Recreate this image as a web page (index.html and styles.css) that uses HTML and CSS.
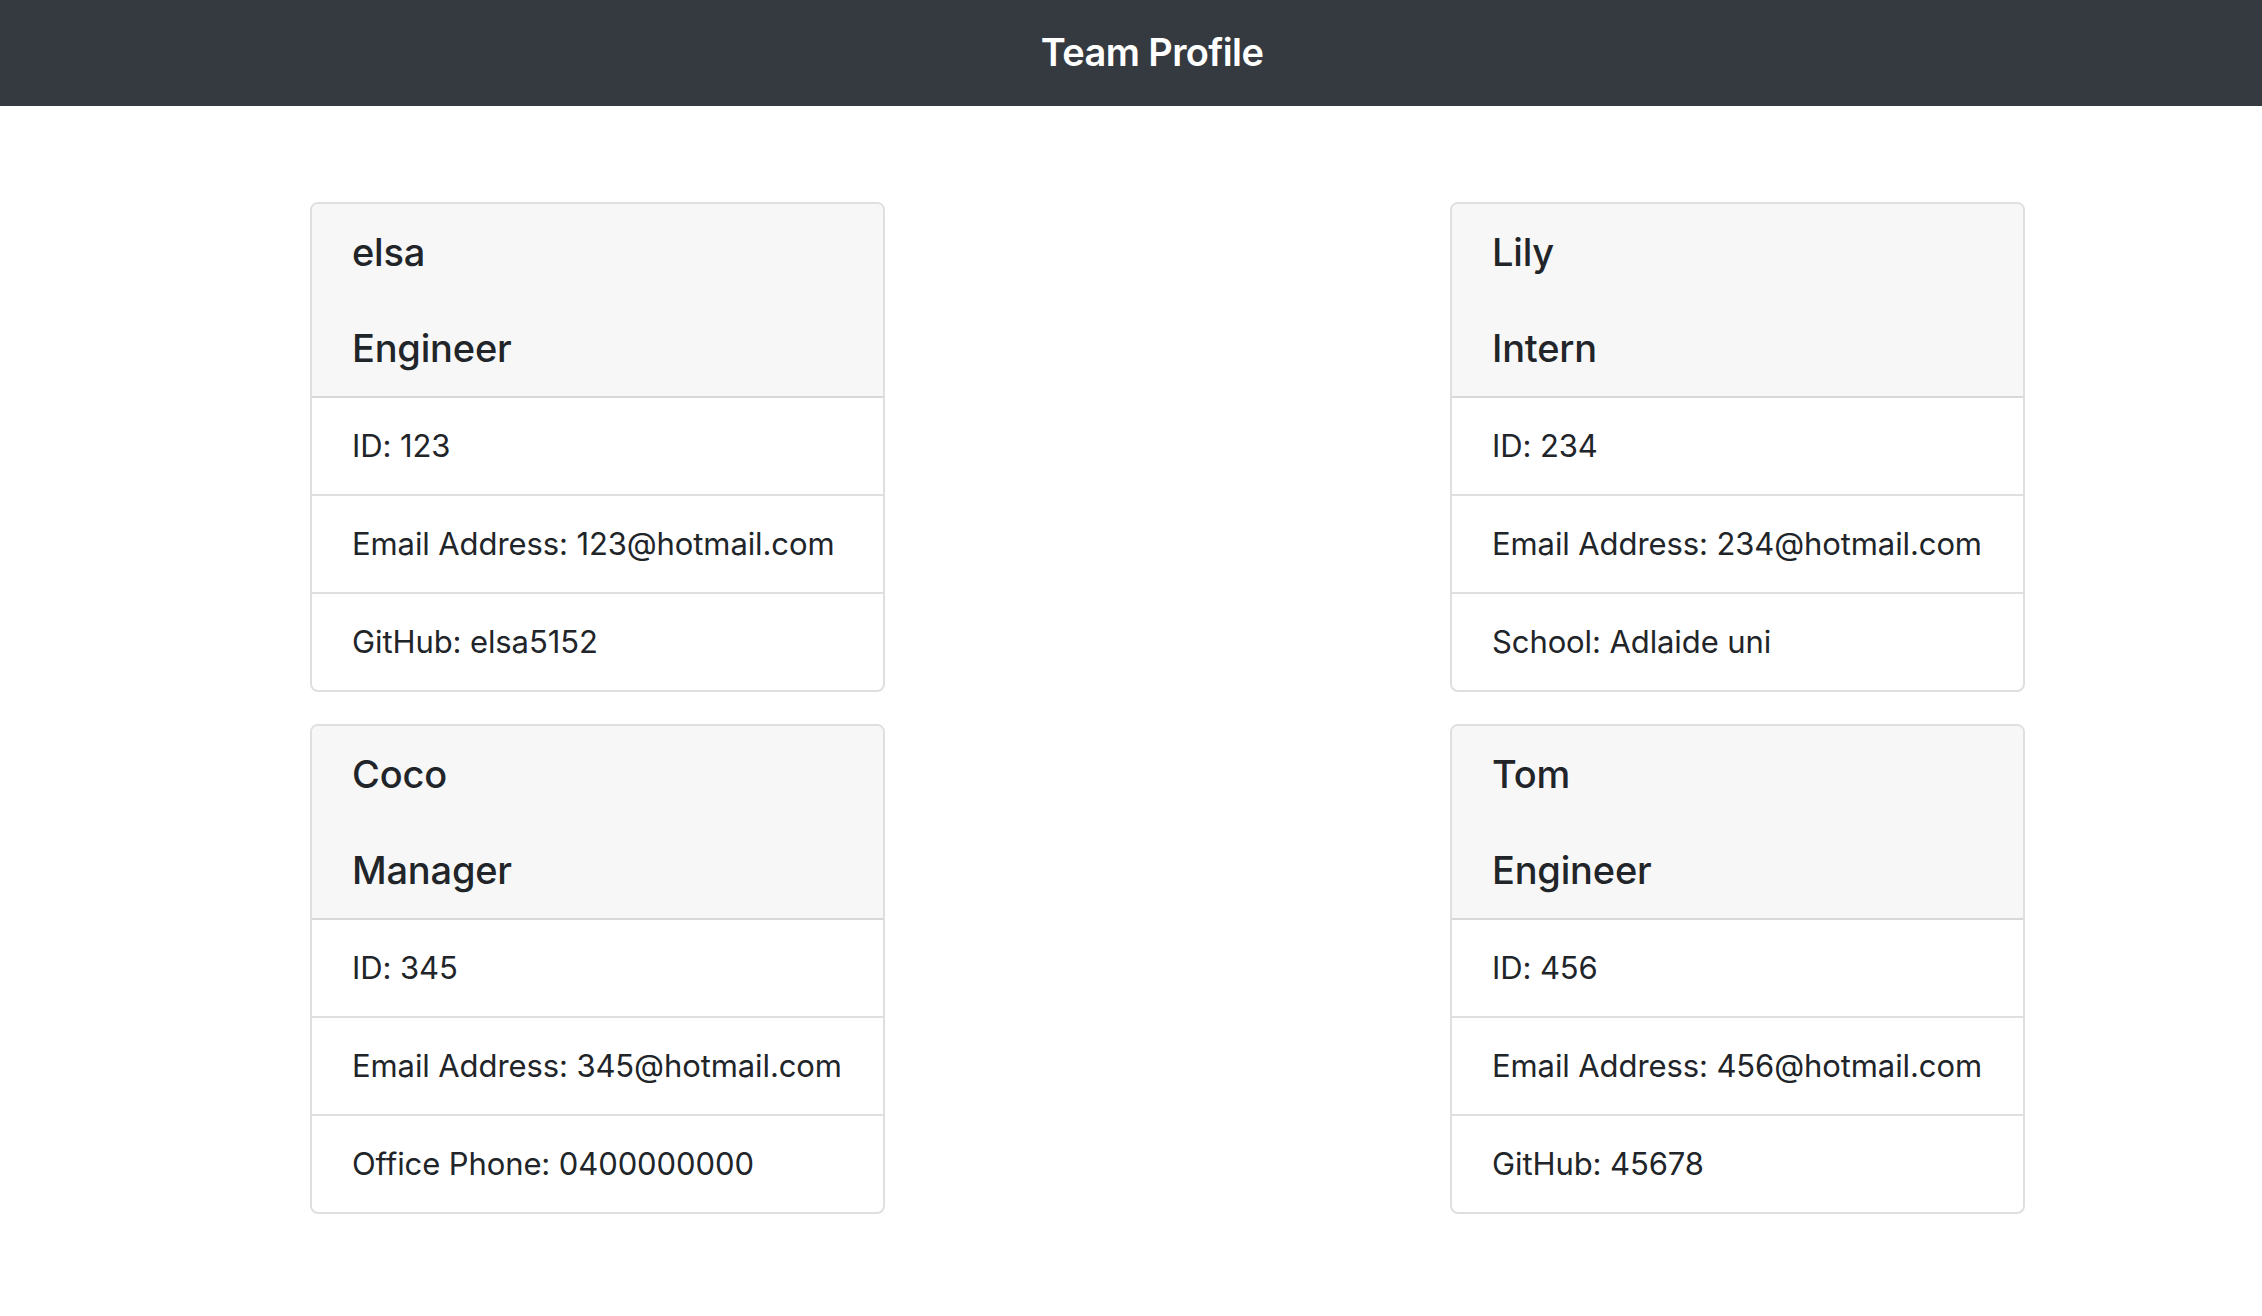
FILE: index.html
```html
<!DOCTYPE html>
<html lang="en">
<head>
<meta charset="utf-8">
<title>Team Profile</title>
<link rel="stylesheet" href="styles.css">
</head>
<body>
<header class="navbar">
  <span class="brand">Team Profile</span>
</header>
<main class="team">
  <section class="card">
    <div class="card-header">
      <h5 class="name">elsa</h5>
      <h5 class="role">Engineer</h5>
    </div>
    <ul class="list">
      <li class="item">ID: 123</li>
      <li class="item">Email Address: 123@hotmail.com</li>
      <li class="item">GitHub: elsa5152</li>
    </ul>
  </section>
  <section class="card">
    <div class="card-header">
      <h5 class="name">Lily</h5>
      <h5 class="role">Intern</h5>
    </div>
    <ul class="list">
      <li class="item">ID: 234</li>
      <li class="item">Email Address: 234@hotmail.com</li>
      <li class="item">School: Adlaide uni</li>
    </ul>
  </section>
  <section class="card">
    <div class="card-header">
      <h5 class="name">Coco</h5>
      <h5 class="role">Manager</h5>
    </div>
    <ul class="list">
      <li class="item">ID: 345</li>
      <li class="item">Email Address: 345@hotmail.com</li>
      <li class="item">Office Phone: 0400000000</li>
    </ul>
  </section>
  <section class="card">
    <div class="card-header">
      <h5 class="name">Tom</h5>
      <h5 class="role">Engineer</h5>
    </div>
    <ul class="list">
      <li class="item">ID: 456</li>
      <li class="item">Email Address: 456@hotmail.com</li>
      <li class="item">GitHub: 45678</li>
    </ul>
  </section>
</main>
</body>
</html>
```
FILE: styles.css
```css
* { box-sizing: border-box; }
html, body { margin: 0; padding: 0; background: #fff; }
body {
  font-family: Inter, "Noto Sans", "Liberation Sans", sans-serif;
  color: #212529;
  font-size: 31px;
  letter-spacing: -0.1px;
  line-height: 48px;
}
.navbar {
  background: #343a40;
  height: 106px;
  display: flex;
  justify-content: center;
  padding: 22px 0 0 42px;
}
.brand {
  color: #fff;
  font-size: 38px;
  line-height: 60px;
  font-weight: 600;
  letter-spacing: -0.6px;
}
.team {
  display: grid;
  grid-template-columns: 575px 575px;
  column-gap: 565px;
  row-gap: 32px;
  padding: 96px 0 0 310px;
}
.card {
  border: 2px solid rgba(0,0,0,0.125);
  border-radius: 8px;
  overflow: hidden;
}
.card-header {
  background: #f7f7f7;
  padding: 24px 40px;
  border-bottom: 2px solid rgba(0,0,0,0.125);
}
.name, .role {
  margin: 0;
  font-size: 38px;
  line-height: 48px;
  font-weight: 500;
  letter-spacing: -0.2px;
}
.name { margin-bottom: 48px; }
.list { list-style: none; margin: 0; padding: 0; }
.item {
  padding: 24px 40px;
  border-bottom: 2px solid rgba(0,0,0,0.125);
}
.item:last-child { border-bottom: 0; }
```
